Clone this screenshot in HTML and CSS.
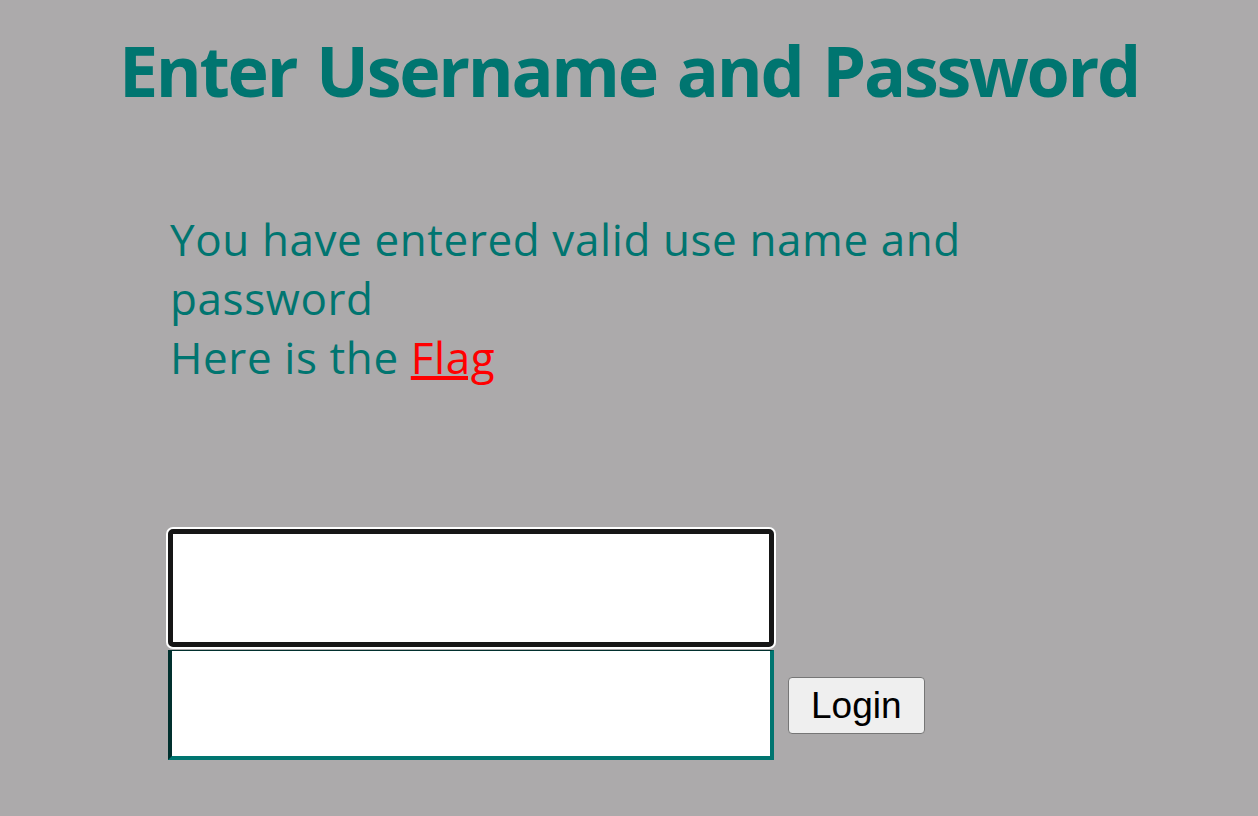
FILE: index.html
```html
<!DOCTYPE html>
<html lang="en">
<head>
<meta charset="utf-8">
<title>Login</title>
<link rel="stylesheet" href="styles.css">
</head>
<body>
<h1 class="title">Enter Username and Password</h1>
<div class="message">
  You have entered valid use name and<br>password<br>Here is the <a class="flag" href="#">Flag</a>
</div>
<form class="login" onsubmit="return false">
  <input class="field field-focused" type="text" name="username">
  <div class="row">
    <input class="field" type="password" name="password">
    <button class="btn" type="submit">Login</button>
  </div>
</form>
</body>
</html>
```

FILE: styles.css
```css
html, body {
  margin: 0;
  padding: 0;
}
body {
  background: #acaaab;
  font-family: "Open Sans", "Noto Sans", sans-serif;
  color: #007570;
  width: 1258px;
  height: 816px;
  overflow: hidden;
}
.title {
  margin: 30px 0 0;
  text-align: center;
  font-size: 70px;
  line-height: 80px;
  font-weight: 700;
  letter-spacing: -2.3px;
  word-spacing: 4px;
}
.message {
  margin: 100px 0 0 170px;
  font-size: 44px;
  line-height: 59px;
  letter-spacing: 0.6px;
}
.flag {
  color: #ff0000;
  text-decoration: underline;
  text-decoration-thickness: 4px;
}
.login {
  margin: 142px 0 0 168px;
  display: flex;
  flex-direction: column;
  gap: 3px;
}
.row {
  display: flex;
  align-items: center;
  gap: 14px;
}
.field {
  box-sizing: border-box;
  width: 606px;
  height: 110px;
  margin: 0;
  padding: 0 8px;
  background: #ffffff;
  border-style: solid;
  border-width: 1px 4px 4px 4px;
  border-color: #01302e #007570 #007570 #01302e;
  outline: none;
  font-size: 30px;
}
.field-focused {
  height: 118px;
  border: 5px solid #161616;
  border-radius: 5px;
  box-shadow: 0 0 0 2px #ffffff;
}
.btn {
  font-family: "Liberation Sans", Arial, sans-serif;
  font-size: 37px;
  line-height: 43px;
  padding: 6px 22px;
  color: #000;
  background: #efefef;
  border: 1px solid #767676;
  border-radius: 4px;
  cursor: pointer;
}
```
